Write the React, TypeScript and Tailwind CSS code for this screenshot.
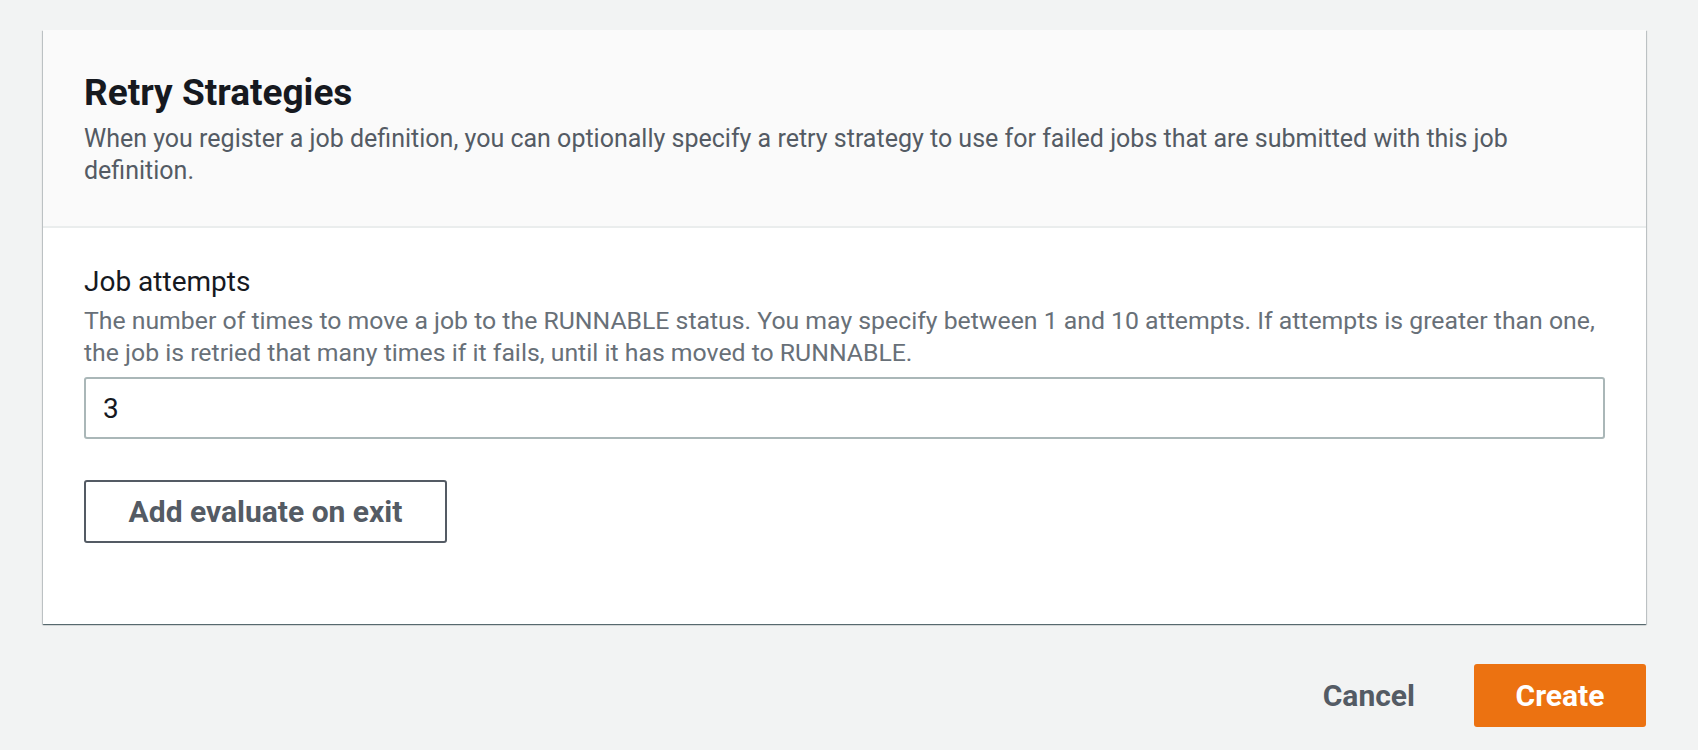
import React from 'react'

function App() {
    return (
        <div className="min-h-screen w-full bg-[#f2f3f3] pl-[43px] pt-[30px] font-['Roboto',sans-serif]">
            <div className="w-[1603px]">
                {/* Retry strategies card */}
                <section className="bg-white shadow-[0_1px_1px_0_rgba(0,28,36,0.5),1px_1px_1px_0_rgba(0,28,36,0.15),-1px_1px_1px_0_rgba(0,28,36,0.15)]">
                    <div className="bg-[#fafafa] border-b-2 border-[#eaeded] px-[41px] pt-[41px] pb-[39px]">
                        <h2 className="text-[37px] leading-[44px] font-bold text-[#16191f]">Retry Strategies</h2>
                        <p className="mt-[8px] text-[25px] leading-[32px] text-[#545b64]">
                            When you register a job definition, you can optionally specify a retry strategy to use for failed jobs that are submitted with this job definition.
                        </p>
                    </div>

                    <div className="px-[41px] pt-[36px] pb-[81px]">
                        <label className="block text-[28px] leading-[36px] text-[#16191f]">Job attempts</label>
                        <p className="mt-[5px] text-[24.8px] leading-[32px] text-[#687078]">
                            The number of times to move a job to the RUNNABLE status. You may specify between 1 and 10 attempts. If attempts is greater than one, the job is retried that many times if it fails, until it has moved to RUNNABLE.
                        </p>
                        <input
                            type="text"
                            defaultValue="3"
                            className="mt-[8px] block w-full h-[62px] rounded-[3px] border-2 border-[#aab7b8] bg-white px-[17px] text-[28px] text-[#16191f] outline-none"
                        />
                        <button className="mt-[41px] h-[63px] w-[363px] rounded-[3px] border-2 border-[#545b64] bg-white text-[30px] font-bold text-[#545b64]">
                            Add evaluate on exit
                        </button>
                    </div>
                </section>

                {/* Footer actions */}
                <div className="mt-[40px] flex items-center justify-end gap-[59px]">
                    <button className="text-[30px] font-bold text-[#545b64]">Cancel</button>
                    <button className="h-[63px] w-[172px] rounded-[3px] bg-[#ec7211] text-[30px] font-bold text-white">
                        Create
                    </button>
                </div>
            </div>
        </div>
    )
}

export default App
